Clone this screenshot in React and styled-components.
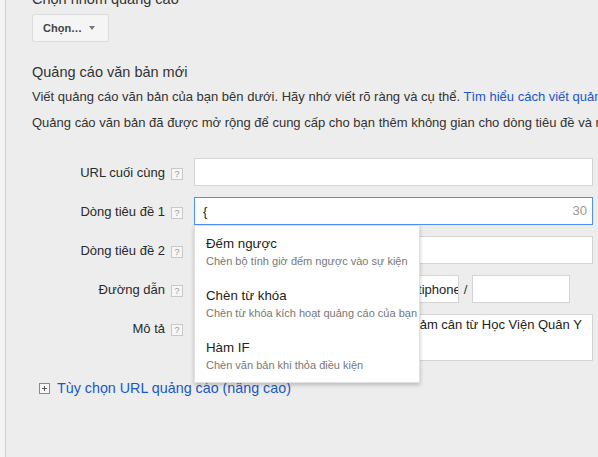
import styled, { createGlobalStyle } from "styled-components";

const GlobalStyle = createGlobalStyle`
  html, body {
    margin: 0;
    padding: 0;
  }
  body {
    width: 598px;
    height: 457px;
    overflow: hidden;
    background: #f4f4f4;
    font-family: "Liberation Sans", Arial, sans-serif;
    font-size: 13px;
    color: #333;
  }
`;

const Page = styled.div`
  display: flex;
  height: 457px;
  padding-left: 5px;
  box-sizing: border-box;
`;

const Panel = styled.div`
  flex: 1;
  min-width: 0;
  background: #ededed;
  border-left: 1px solid #d0d0d0;
  padding-left: 26px;
  overflow: hidden;
  white-space: nowrap;
`;

const Heading = styled.div`
  font-size: 14.5px;
  line-height: 18px;
  color: #333;
  margin-top: ${(props) => props.mt || 0}px;
  margin-bottom: ${(props) => props.mb || 0}px;
`;

const SelectButton = styled.button`
  display: inline-flex;
  align-items: center;
  gap: 7px;
  margin-top: 6px;
  height: 28px;
  padding: 0 13px 0 10px;
  background: #f5f5f5;
  border: 1px solid #dcdcdc;
  border-radius: 2px;
  font-family: "Liberation Sans", Arial, sans-serif;
  font-size: 11px;
  font-weight: bold;
  color: #444;
`;

const Caret = styled.span`
  width: 0;
  height: 0;
  border-left: 3.5px solid transparent;
  border-right: 3.5px solid transparent;
  border-top: 4px solid #777;
`;

const Para = styled.p`
  margin: 0;
  font-size: 13px;
  line-height: 26px;
  color: #333;
`;

const Link = styled.span`
  color: #1a56cc;
`;

const Form = styled.div`
  display: flex;
  flex-direction: column;
  gap: 11px;
  margin-top: 22px;
`;

const Row = styled.div`
  display: flex;
  align-items: ${(props) => (props.top ? "flex-start" : "center")};
`;

const LabelCell = styled.div`
  width: 151px;
  height: 28px;
  margin-right: 11px;
  display: flex;
  justify-content: flex-end;
  align-items: center;
  gap: 6px;
  flex-shrink: 0;
`;

const Label = styled.span`
  font-size: 13px;
  color: #2a2a2a;
`;

const Help = styled.span`
  box-sizing: border-box;
  width: 12px;
  height: 12px;
  margin-top: 3px;
  border: 1px solid #c8c8c8;
  background: #f6f6f6;
  color: #999;
  font-size: 9px;
  line-height: 10px;
  text-align: center;
`;

const Field = styled.div`
  position: relative;
  width: 399px;
  flex-shrink: 0;
  display: flex;
  align-items: center;
  gap: 5px;
`;

const TextInput = styled.input`
  box-sizing: border-box;
  width: ${(props) => props.w || "100%"};
  height: 28px;
  margin: 0;
  padding: 0 ${(props) => props.pr ?? 8}px 0 ${(props) => props.pl ?? 8}px;
  border: 1px solid ${(props) => (props.focused ? "#4d90fe" : "#d4d4d4")};
  background: #fff;
  font-family: "Liberation Sans", Arial, sans-serif;
  font-size: 13px;
  color: #222;
  outline: none;
  flex-shrink: 0;
`;

const Counter = styled.span`
  position: absolute;
  right: 6px;
  top: 0;
  line-height: 28px;
  font-size: 13px;
  color: #999;
`;

const Domain = styled.span`
  width: 153px;
  flex-shrink: 0;
  overflow: hidden;
  color: #333;
`;

const Slash = styled.span`
  color: #333;
`;

const TextArea = styled.textarea`
  box-sizing: border-box;
  width: 100%;
  height: 47px;
  margin: 0;
  padding: 2px 8px 2px 5px;
  border: 1px solid #d4d4d4;
  background: #fff;
  resize: none;
  overflow: hidden;
  white-space: pre;
  font-family: "Liberation Sans", Arial, sans-serif;
  font-size: 13px;
  line-height: 15px;
  color: #222;
  outline: none;
`;

const Menu = styled.div`
  position: absolute;
  top: 100%;
  left: 0;
  z-index: 10;
  width: 226px;
  box-sizing: border-box;
  background: #fff;
  border: 1px solid rgba(0, 0, 0, 0.12);
  box-shadow: 0 2px 4px rgba(0, 0, 0, 0.22);
`;

const MenuItem = styled.div`
  padding: 9px 11px;
`;

const MenuTitle = styled.div`
  font-size: 13.3px;
  line-height: 18px;
  color: #222;
`;

const MenuHint = styled.div`
  font-size: 11px;
  line-height: 16px;
  color: #777;
`;

const Advanced = styled.div`
  display: flex;
  align-items: center;
  gap: 7px;
  margin: 18px 0 0 7px;
  font-size: 14.3px;
  line-height: 18px;
  color: #1a56cc;
`;

const PlusIcon = () => (
  <svg width="11" height="11" viewBox="0 0 11 11">
    <rect x="0.5" y="0.5" width="10" height="10" fill="#f7f7f7" stroke="#8a8a8a" />
    <path d="M3 5.5h5M5.5 3v5" stroke="#555" strokeWidth="1" />
  </svg>
);

const menuItems = [
  { title: "Đếm ngược", hint: "Chèn bộ tính giờ đếm ngược vào sự kiện" },
  { title: "Chèn từ khóa", hint: "Chèn từ khóa kích hoạt quảng cáo của bạn" },
  { title: "Hàm IF", hint: "Chèn văn bản khi thỏa điều kiện" },
];

const FormLabel = ({ children }) => (
  <LabelCell>
    <Label>{children}</Label>
    <Help>?</Help>
  </LabelCell>
);

export default function App() {
  return (
    <>
      <GlobalStyle />
      <Page>
        <Panel>
          <Heading mt={-10}>Chọn nhóm quảng cáo</Heading>
          <SelectButton>
            Chọn… <Caret />
          </SelectButton>

          <Heading mt={21} mb={3}>
            Quảng cáo văn bản mới
          </Heading>
          <Para>
            Viết quảng cáo văn bản của bạn bên dưới. Hãy nhớ viết rõ ràng và cụ thể.{" "}
            <Link>Tìm hiểu cách viết quảng cáo văn bản hiệu quả</Link>
          </Para>
          <Para>
            Quảng cáo văn bản đã được mở rộng để cung cấp cho bạn thêm không gian cho dòng
            tiêu đề và mô tả.
          </Para>

          <Form>
            <Row>
              <FormLabel>URL cuối cùng</FormLabel>
              <Field>
                <TextInput readOnly value="" />
              </Field>
            </Row>
            <Row>
              <FormLabel>Dòng tiêu đề 1</FormLabel>
              <Field>
                <TextInput readOnly focused value="{" />
                <Counter>30</Counter>
                <Menu>
                  {menuItems.map((item) => (
                    <MenuItem key={item.title}>
                      <MenuTitle>{item.title}</MenuTitle>
                      <MenuHint>{item.hint}</MenuHint>
                    </MenuItem>
                  ))}
                </Menu>
              </Field>
            </Row>
            <Row>
              <FormLabel>Dòng tiêu đề 2</FormLabel>
              <Field>
                <TextInput readOnly value="" />
              </Field>
            </Row>
            <Row>
              <FormLabel>Đường dẫn</FormLabel>
              <Field>
                <Domain>www.hocvienquany.vn</Domain>
                <Slash>/</Slash>
                <TextInput readOnly w="98px" pl={3} pr={0} value="giamcan-tiphone-x" />
                <Slash>/</Slash>
                <TextInput readOnly w="98px" value="" />
              </Field>
            </Row>
            <Row top>
              <FormLabel>Mô tả</FormLabel>
              <Field>
                <TextArea
                  readOnly
                  wrap="off"
                  value="Thuốc giảm cân an toàn. Sản phẩm giảm cân từ Học Viện Quân Y"
                />
              </Field>
            </Row>
          </Form>

          <Advanced>
            <PlusIcon />
            Tùy chọn URL quảng cáo (nâng cao)
          </Advanced>
        </Panel>
      </Page>
    </>
  );
}
